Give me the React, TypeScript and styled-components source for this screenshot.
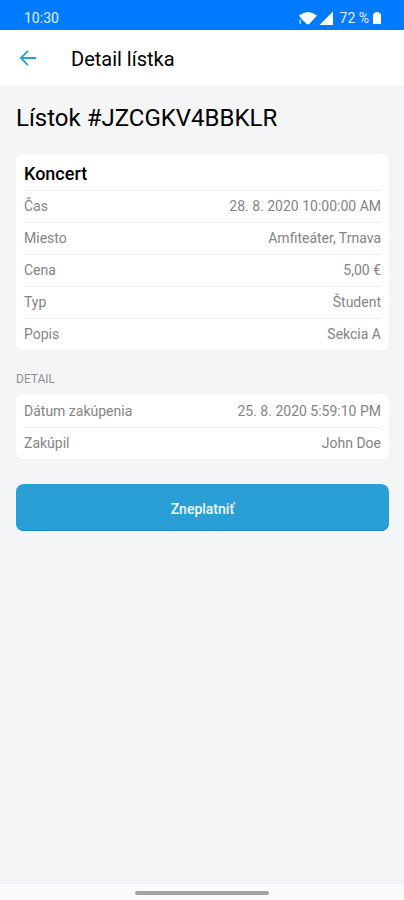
import React from "react";
import styled, { createGlobalStyle } from "styled-components";

const Global = createGlobalStyle`
  * { box-sizing: border-box; }
  body { margin: 0; background: #f3f5f7; font-family: Roboto, sans-serif; color: #000; }
  h1, h2, h3, dl, dd { margin: 0; }
`;
const Screen = styled.div`
  min-height: 100vh;
  display: flex;
  flex-direction: column;
`;
const StatusBar = styled.div`
  height: 30px;
  padding: 5px 23px 0 24px;
  display: flex;
  align-items: center;
  justify-content: space-between;
  background: #007aff;
  color: #e6f2ff;
  font-size: 14px;
`;
const StatusIcons = styled.div`
  display: flex;
  align-items: center;
  gap: 2px;
`;
const BatteryLevel = styled.span`
  margin: 0 2px 0 5px;
`;
const Header = styled.header`
  height: 56px;
  padding: 2px 14px 0;
  display: flex;
  align-items: center;
  gap: 29px;
  background: #fff;
`;
const BackButton = styled.button`
  display: flex;
  align-items: center;
  justify-content: center;
  width: 28px;
  height: 28px;
  padding: 0;
  border: 0;
  background: none;
  color: #2a9fd0;
`;
const HeaderTitle = styled.h1`
  font-size: 20px;
  line-height: 24px;
  font-weight: 400;
`;
const Content = styled.main`
  flex: 1;
  padding: 16px 15px 16px 16px;
`;
const TicketTitle = styled.h2`
  font-size: 24px;
  line-height: 32px;
  font-weight: 400;
  margin-bottom: 20px;
`;
const Card = styled.section`
  padding: 2px 8px 0;
  border-radius: 8px;
  background: #fff;
`;
const CardTitle = styled.h3`
  padding: 6px 0 4px;
  line-height: 24px;
  font-size: 18px;
  font-weight: 500;
  border-bottom: 1px solid #f0f0f0;
`;
const Row = styled.div`
  display: flex;
  justify-content: space-between;
  line-height: 31px;
  font-size: 14px;
  color: #848484;

  & + & {
    border-top: 1px solid #f0f0f0;
  }
`;
const SectionLabel = styled.h3`
  margin: 20px 0 6px;
  font-size: 12px;
  line-height: 18px;
  font-weight: 400;
  color: #929496;
`;
const Action = styled.button`
  width: 100%;
  height: 47px;
  margin-top: 25px;
  padding: 2px 0 0;
  border: 0;
  border-radius: 8px;
  background: #2a9fd6;
  box-shadow: inset 0 -1px #138fc4;
  color: #f2faff;
  font: 500 14px Roboto, sans-serif;
`;
const NavBar = styled.footer`
  height: 16px;
  padding-top: 2px;
  display: flex;
  justify-content: center;
  align-items: center;
  background: #fafafa;
`;
const Handle = styled.div`
  width: 33%;
  height: 4px;
  border-radius: 2px;
  background: #a2a2a2;
`;

type Item = [label: string, value: string];

const ticketInfo: Item[] = [
  ["Čas", "28. 8. 2020 10:00:00 AM"],
  ["Miesto", "Amfiteáter, Trnava"],
  ["Cena", "5,00 €"],
  ["Typ", "Študent"],
  ["Popis", "Sekcia A"],
];
const purchaseInfo: Item[] = [
  ["Dátum zakúpenia", "25. 8. 2020 5:59:10 PM"],
  ["Zakúpil", "John Doe"],
];

const InfoList = ({ items }: { items: Item[] }) => (
  <dl>
    {items.map(([label, value]) => (
      <Row key={label}>
        <dt>{label}</dt>
        <dd>{value}</dd>
      </Row>
    ))}
  </dl>
);

export default function App() {
  return (
    <Screen>
      <Global />
      <StatusBar>
        <span>10:30</span>
        <StatusIcons>
          <svg width="18" height="14" viewBox="0 0 18 14" fill="#fff" aria-hidden="true">
            <path d="M0 4.5Q9-2.5 18 4.5L10 13.2H8L3 8.5Z" />
            <path d="M.5 8.5H2V13H.5Z" opacity=".7" />
          </svg>
          <svg width="14" height="14" viewBox="0 0 14 14" fill="#fff" aria-hidden="true">
            <path d="M14 .5V14H.5Z" />
          </svg>
          <BatteryLevel>72 %</BatteryLevel>
          <svg width="8" height="12" viewBox="0 0 8 12" fill="#fff" aria-hidden="true">
            <path d="M2 0h4v1.5h2V12H0V1.5h2z" />
          </svg>
        </StatusIcons>
      </StatusBar>
      <Header>
        <BackButton aria-label="Späť">
          <svg width="24" height="24" viewBox="0 0 24 24" fill="none" stroke="currentColor" strokeWidth="1.8">
            <path d="M20 11H5.5M12 3.8 4.8 11l7.2 7.2" />
          </svg>
        </BackButton>
        <HeaderTitle>Detail lístka</HeaderTitle>
      </Header>
      <Content>
        <TicketTitle>Lístok #JZCGKV4BBKLR</TicketTitle>
        <Card>
          <CardTitle>Koncert</CardTitle>
          <InfoList items={ticketInfo} />
        </Card>
        <SectionLabel>DETAIL</SectionLabel>
        <Card>
          <InfoList items={purchaseInfo} />
        </Card>
        <Action>Zneplatniť</Action>
      </Content>
      <NavBar>
        <Handle />
      </NavBar>
    </Screen>
  );
}
